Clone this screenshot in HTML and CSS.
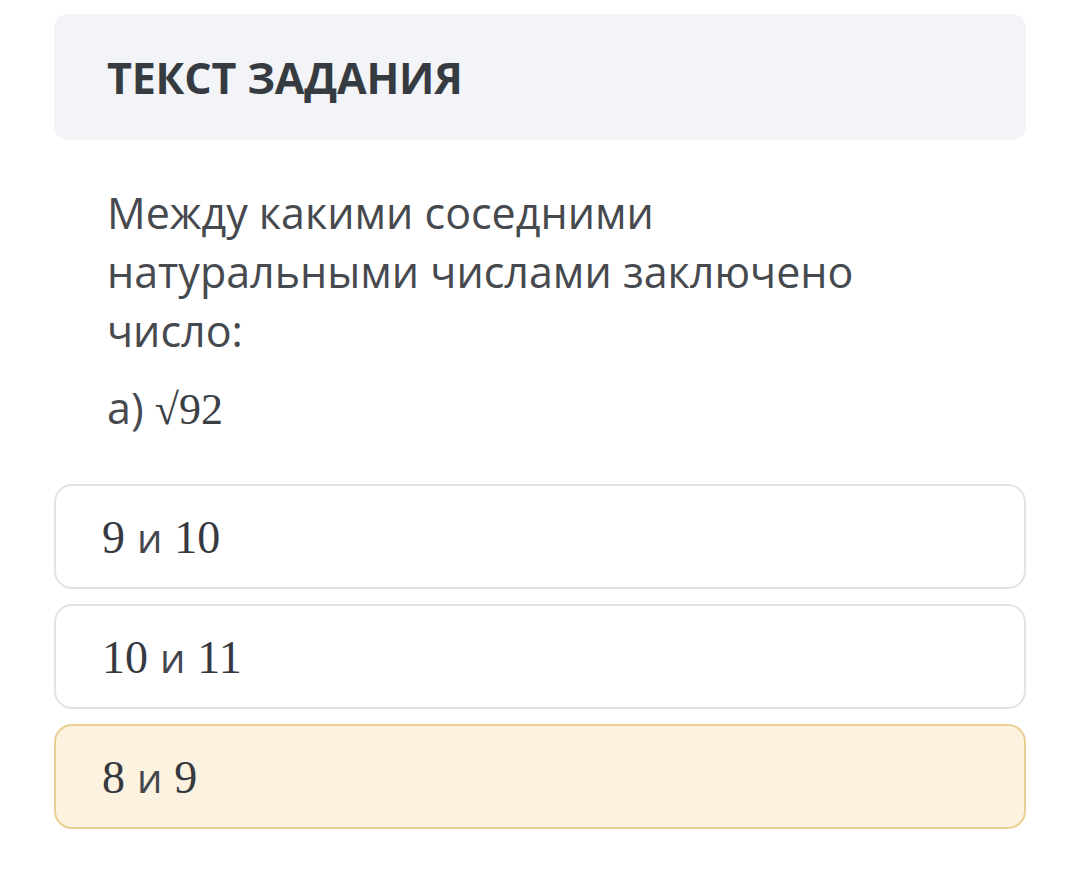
FILE: index.html
```html
<!DOCTYPE html>
<html lang="ru">
<head>
<meta charset="utf-8">
<link rel="stylesheet" href="styles.css">
</head>
<body>
<div class="page">
  <div class="header"><h1 class="title">ТЕКСТ ЗАДАНИЯ</h1></div>
  <div class="question">
    <p class="q-text">Между какими соседними натуральными числами заключено число:</p>
    <p class="q-item">а) <span class="math">√92</span></p>
  </div>
  <div class="options">
    <div class="option"><span class="answer"><span class="math">9</span> <span class="conj">и</span> <span class="math">10</span></span></div>
    <div class="option"><span class="answer"><span class="math">10</span> <span class="conj">и</span> <span class="math">11</span></span></div>
    <div class="option selected"><span class="answer"><span class="math">8</span> <span class="conj">и</span> <span class="math">9</span></span></div>
  </div>
</div>
</body>
</html>
```
FILE: styles.css
```css
html, body {
  margin: 0;
  padding: 0;
  background: #ffffff;
}
body {
  font-family: "Open Sans", "Noto Sans", sans-serif;
  color: #3c4046;
}
.page {
  width: 972px;
  margin-left: 54px;
  padding-top: 14px;
}
.header {
  background: #f2f4f7;
  border-radius: 14px;
  height: 126px;
  display: flex;
  align-items: center;
  padding-left: 53px;
}
.title {
  margin: 0;
  font-size: 43px;
  font-weight: 700;
  color: #363b42;
  letter-spacing: -0.2px;
}
.question {
  padding-left: 53px;
  padding-top: 43px;
  width: 780px;
}
.q-text {
  margin: 0;
  font-size: 43px;
  line-height: 59px;
  color: #46494e;
}
.q-item {
  margin: 18px 0 0 0;
  font-size: 43px;
  line-height: 59px;
  color: #46494e;
}
.q-item .math {
  font-size: 44px;
  color: #3c3f44;
}
.math {
  font-family: "Liberation Serif", "DejaVu Serif", serif;
}
.options {
  margin-top: 45px;
  display: flex;
  flex-direction: column;
  gap: 15px;
}
.option {
  height: 101px;
  border: 2px solid #e1e3e6;
  border-radius: 18px;
  display: flex;
  align-items: center;
  padding-left: 46px;
  font-size: 46px;
  color: #363a40;
}
.answer {
  white-space: pre;
  margin-top: -4px;
}
.option .conj {
  font-family: "Open Sans", sans-serif;
  font-size: 40px;
  color: #44484e;
}
.option.selected {
  background: #fbf2df;
  border-color: #e9d092;
}
```
